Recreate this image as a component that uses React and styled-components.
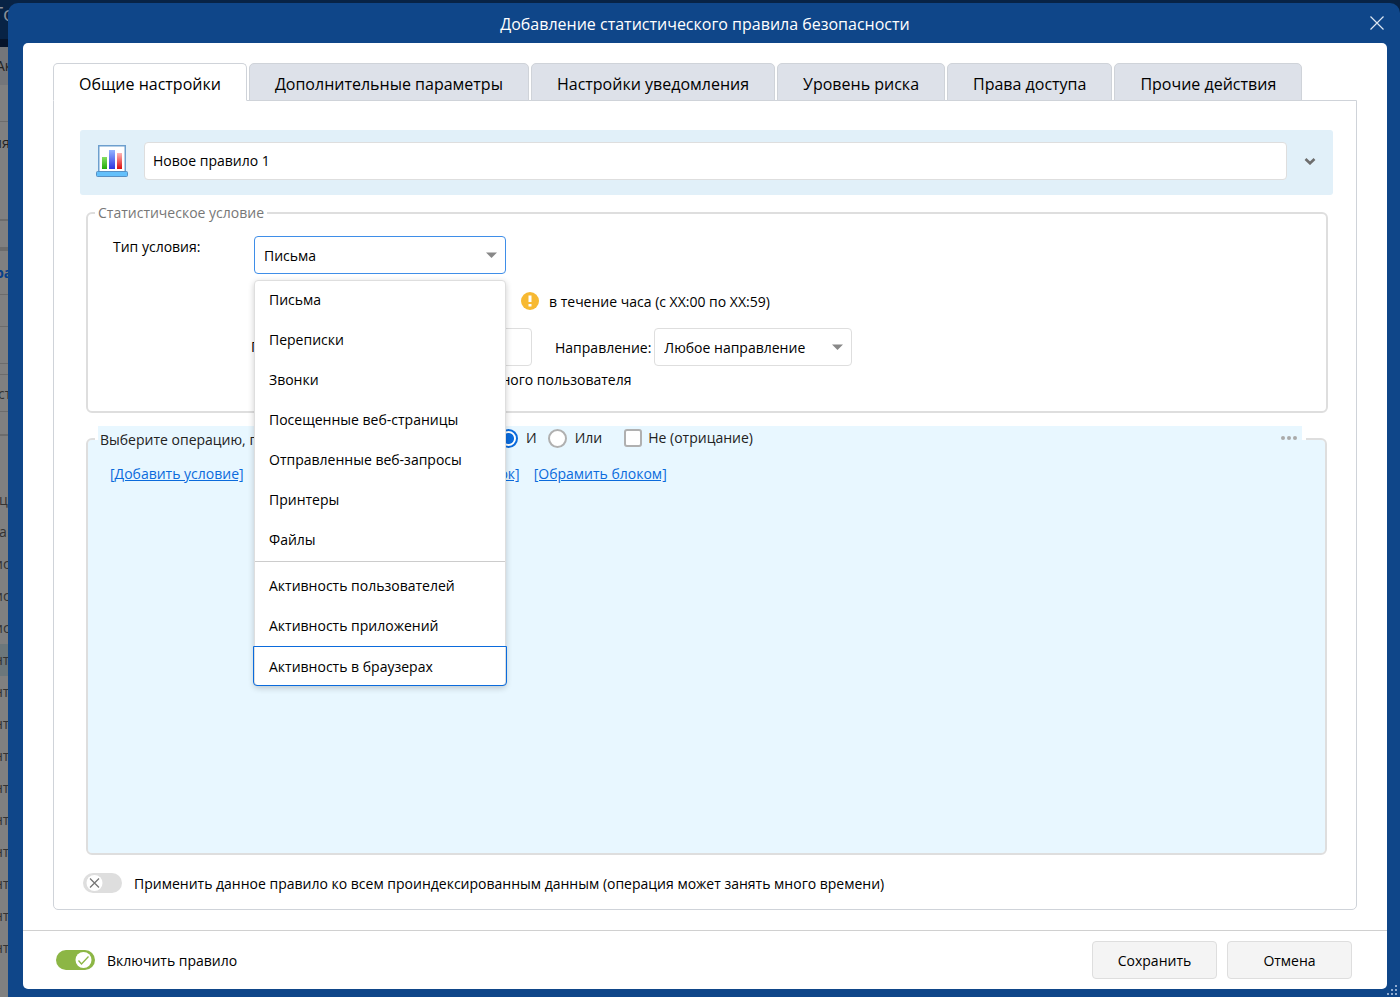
import React, { useState } from 'react';
import styled, { createGlobalStyle, css } from 'styled-components';

const GlobalStyle = createGlobalStyle`
  * { box-sizing: border-box; }
  body {
    margin: 0;
    background: #808080;
    color: #000;
    font: 14px/20px 'Open Sans', 'Noto Sans', sans-serif;
  }
  button, input, select { font: inherit; color: inherit; }
`;

const border = '#dedede';
const blue = '#0b6bdc';

const Screen = styled.div`
  position: relative;
  display: flex;
  min-height: 100vh;
  overflow: hidden;
`;

const Backdrop = styled.div`
  position: absolute;
  inset: 0;
  overflow: hidden;
  background: #808080;
  white-space: nowrap;
`;

const BackHeader = styled.div`
  height: 47px;
  border-bottom: 8px solid #06142b;
  background: #082345;
  color: #8a8f98;
  font-size: 20px;
  line-height: 28px;
  text-indent: -8px;
`;

const BackRow = styled.div`
  height: ${p => p.$height || 32}px;
  line-height: ${p => p.$height || 32}px;
  overflow: hidden;
  color: ${p => p.$color || '#333'};
  background: ${p => p.$bg || 'transparent'};
  font-weight: ${p => (p.$bold ? 700 : 400)};
  text-indent: ${p => p.$indent || 0}px;
  border-bottom: ${p => (p.$line ? `${p.$line}px solid #6c6c6c` : '0')};
`;

const Dialog = styled.section`
  position: relative;
  flex: 1;
  display: flex;
  flex-direction: column;
  min-width: 0;
  margin: 3px 0 0 8px;
  padding: 0 13px 8px 15px;
  border-radius: 10px 10px 0 0;
  background: #0f4689;
`;

const TitleBar = styled.header`
  display: grid;
  grid-template-columns: 20px 1fr 20px;
  align-items: center;
  height: 40px;
  color: #fff;
  h1 {
    margin: 0;
    padding-top: 2px;
    font-size: 16px;
    font-weight: 400;
    text-align: center;
  }
`;

const IconButton = styled.button`
  display: flex;
  align-items: center;
  justify-content: center;
  width: 20px;
  height: 20px;
  padding: 0;
  border: 0;
  background: none;
`;

const Sheet = styled.div`
  flex: 1;
  display: flex;
  flex-direction: column;
  border-radius: 5px;
  background: #fff;
`;

const Body = styled.div`
  flex: 1;
  display: flex;
  flex-direction: column;
  padding: 20px 30px;
`;

const Tabs = styled.div`
  display: flex;
  gap: 2px;
  margin-bottom: -1px;
`;

const Tab = styled.button`
  height: 38px;
  padding: 3px 25px 0;
  border: 1px solid #cfd3d9;
  border-bottom-color: ${p => (p.$active ? '#fff' : '#cfd3d9')};
  border-radius: 5px 5px 0 0;
  background: ${p => (p.$active ? '#fff' : '#dde1e9')};
  font-size: 16px;
  white-space: nowrap;
  z-index: 1;
`;

const Panel = styled.div`
  flex: 1;
  display: flex;
  flex-direction: column;
  padding: 29px 23px 15px 26px;
  border: 1px solid #cfd3d9;
  border-radius: 0 0 5px 5px;
`;

const RuleBar = styled.div`
  display: flex;
  align-items: center;
  height: 65px;
  padding: 0 13px 3px 15px;
  border-radius: 3px;
  background: #e1f0f9;
`;

const RuleName = styled.input`
  flex: 1;
  height: 38px;
  margin: 0 13px 0 15px;
  padding: 0 8px 2px;
  border: 1px solid ${border};
  border-radius: 4px;
  background: #fff;
`;

const group = css`
  min-width: 0;
  padding: 0;
  border: 2px solid ${border};
  border-radius: 6px;
`;

const Condition = styled.fieldset`
  ${group}
  height: 210px;
  margin: 8px 5px 0 6px;
  legend {
    margin-left: 7px;
    padding: 0 3px;
    color: #777;
  }
`;

const Operations = styled.fieldset`
  ${group}
  flex: 1;
  margin: 13px 6px 0 6px;
  background: #e8f7ff;
  background-clip: padding-box;
`;

const OperationLegend = styled.legend`
  width: calc(100% - 26px);
  margin-left: 7px;
  padding: 0 4px 0 3px;
`;

const OperationBar = styled.div`
  display: flex;
  align-items: center;
  height: 26px;
  padding: 0 5px 2px 2px;
  background: #e8f7ff;
  color: #222;
`;

const OperationText = styled.span`
  width: 399px;
  padding-top: 3px;
  overflow: hidden;
  white-space: nowrap;
`;

const Choice = styled.label`
  display: flex;
  align-items: center;
  gap: ${p => p.$gap || 8}px;
  margin-right: ${p => p.$after || 0}px;
  input {
    appearance: none;
    flex: none;
    width: 19px;
    height: 19px;
    margin: 0;
    border: 2px solid #b0b0b0;
    background: #fff;
  }
  input[type='radio'] { border-radius: 50%; }
  input[type='checkbox'] {
    width: 18px;
    height: 18px;
    border-radius: 3px;
  }
  input[type='radio']:checked {
    border-color: ${blue};
    background: radial-gradient(circle, ${blue} 5px, #fff 6px);
  }
`;

const More = styled(IconButton)`
  width: 16px;
  margin-left: auto;
`;

const Links = styled.nav`
  display: flex;
  gap: 14px;
  padding: 12px 22px;
  a { color: ${blue}; white-space: nowrap; }
`;

const WideLink = styled.span`
  width: 262px;
  text-align: right;
`;

const Fields = styled.div`
  display: grid;
  grid-template-columns: 141px 1fr;
  padding: 13px 0 0 25px;
`;

const FieldLabel = styled.label`
  padding-top: 1px;
`;

const FieldColumn = styled.div`
  display: flex;
  flex-direction: column;
  align-items: flex-start;
`;

const Picker = styled.div`
  position: relative;
  width: ${p => p.$width}px;
  svg {
    position: absolute;
    top: 16px;
    right: 9px;
    pointer-events: none;
  }
`;

const Select = styled.select`
  appearance: none;
  width: 100%;
  height: 38px;
  padding: 2px 28px 0 9px;
  border: 1px solid ${p => (p.$open ? '#3f8ee8' : border)};
  border-radius: 4px;
  background: #fff;
  outline: 0;
`;

const Menu = styled.ul`
  position: absolute;
  z-index: 5;
  top: 44px;
  left: 0;
  right: 0;
  margin: 0;
  padding: 0;
  border: 1px solid ${border};
  border-radius: 4px;
  background: #fff;
  box-shadow: 0 2px 6px rgba(0, 0, 0, 0.2);
  list-style: none;
`;

const MenuItem = styled.li`
  height: 40px;
  padding: 0 14px;
  line-height: 38px;
  cursor: pointer;
  ${p => p.$divided && css`
    height: 46px;
    padding-top: 5px;
    border-top: 1px solid #ccc;
  `}
  ${p => p.$focused && css`
    margin: -1px -2px -1px;
    padding: 0 15px;
    border: 1px solid ${blue};
    border-radius: 0 0 4px 4px;
    line-height: 40px;
  `}
`;

const Row = styled.div`
  display: flex;
  align-items: center;
  gap: 3px;
  height: ${p => p.$height}px;
  padding-left: ${p => p.$indent || 0}px;
  white-space: nowrap;
`;

const Period = styled.span`
  margin-left: 7px;
  padding-top: 2px;
`;

const DirectionLabel = styled.label`
  padding-top: 2px;
`;

const PersonField = styled.label`
  display: flex;
  align-items: center;
  width: 281px;
  margin: 0 20px 0 -3px;
  input {
    flex: 1;
    min-width: 0;
    height: 38px;
    margin-left: 8px;
    border: 1px solid ${border};
    border-radius: 4px;
  }
`;

const Switch = styled.label`
  display: flex;
  align-items: center;
  gap: 12px;
`;

const SwitchText = styled.span`
  padding-top: 2px;
`;

const Track = styled.span`
  position: relative;
  display: flex;
  justify-content: ${p => (p.$on ? 'flex-end' : 'flex-start')};
  width: 39px;
  height: 20px;
  padding: 2px 3px;
  border-radius: 10px;
  background: ${p => (p.$on ? '#8cb645' : '#dedede')};
  input {
    position: absolute;
    inset: 0;
    margin: 0;
    opacity: 0;
  }
`;

const ApplyRow = styled.div`
  padding: 17px 0 0 3px;
`;

const Footer = styled.footer`
  display: flex;
  align-items: center;
  gap: 10px;
  height: 59px;
  padding: 0 35px 0 33px;
  border-top: 1px solid #d0d0d0;
`;

const FooterButton = styled.button`
  width: 125px;
  height: 38px;
  padding: 2px 0 0;
  border: 1px solid ${border};
  border-radius: 4px;
  background: #f4f4f4;
  &:first-of-type { margin-left: auto; }
`;

const Grip = styled.svg`
  position: absolute;
  right: 2px;
  bottom: 0;
`;

const tabs = [
  'Общие настройки',
  'Дополнительные параметры',
  'Настройки уведомления',
  'Уровень риска',
  'Права доступа',
  'Прочие действия',
];

const types = [
  'Письма',
  'Переписки',
  'Звонки',
  'Посещенные веб-страницы',
  'Отправленные веб-запросы',
  'Принтеры',
  'Файлы',
  'Активность пользователей',
  'Активность приложений',
  'Активность в браузерах',
];

const backRows = ['ц', 'а', 'ис', 'ис', 'ис', 'нт', 'нт', 'нт', 'нт', 'нт', 'нт', 'нт', 'нт', 'нт', 'нт'];

const ChartIcon = () => (
  <svg width="34" height="36" viewBox="0 0 34 36">
    <defs>
      <linearGradient id="g1" x2="0" y2="1"><stop stopColor="#86df62" /><stop offset="1" stopColor="#22ac08" /></linearGradient>
      <linearGradient id="g2" x2="0" y2="1"><stop stopColor="#93b5ff" /><stop offset="1" stopColor="#2d35df" /></linearGradient>
      <linearGradient id="g3" x2="0" y2="1"><stop stopColor="#ffb4b4" /><stop offset="1" stopColor="#dc0c0c" /></linearGradient>
    </defs>
    <rect x="3.75" y="2.75" width="26.5" height="26" fill="#fff" stroke="#6d9fce" strokeWidth="1.5" />
    <rect x="7" y="14" width="5" height="12" fill="url(#g1)" />
    <rect x="14" y="7" width="6" height="19" fill="url(#g2)" />
    <rect x="22" y="10" width="5" height="16" fill="url(#g3)" />
    <rect x="1.500" y="28.500" width="31" height="5" rx="1" fill="#63c0fb" stroke="#5790c4" />
  </svg>
);

const Caret = () => (
  <svg width="11" height="6" viewBox="0 0 11 6"><path d="M0 .5h11L5.5 6z" fill="#888" /></svg>
);

const Toggle = ({ label, on, onChange }) => (
  <Switch>
    <Track $on={on}>
      <input type="checkbox" role="switch" checked={on} onChange={onChange} />
      <svg width="17" height="16" viewBox="0 0 17 16">
        <circle cx="8.5" cy="8" r="8" fill="#fff" />
        {on
          ? <path d="M3.5 8.5l3 3.5 7-7.5" fill="none" stroke="#8cb645" strokeWidth="1.3" />
          : <path d="M4 3.5l9 9m0-9l-9 9" fill="none" stroke="#777" strokeWidth="1.3" />}
      </svg>
    </Track>
    <SwitchText>{label}</SwitchText>
  </Switch>
);

const Background = () => (
  <Backdrop aria-hidden="true">
    <BackHeader>То</BackHeader>
    <BackRow $height={38} $indent={-4} $bg="#74767a" $color="#222">Ак</BackRow>
    <BackRow $height={37} $line={1} />
    <BackRow $height={41} $indent={-7} $color="#222">ия</BackRow>
    <BackRow $height={58} $line={2} />
    <BackRow $height={30} $line={4} />
    <BackRow $height={44} $indent={-5} $bold $color="#08408a" $line={1}>ра</BackRow>
    <BackRow $height={32} $line={1} />
    <BackRow $height={37} $line={1} />
    <BackRow $height={11} $line={1} />
    <BackRow $height={37} $indent={-2} $line={1}>ст</BackRow>
    <BackRow $height={24} $line={2} />
    <BackRow $height={48} />
    {backRows.map((text, i) => (
      <BackRow key={i} $indent={i < 2 ? -1 : -6} $bg={i === 5 ? '#6c777b' : undefined}>{text}</BackRow>
    ))}
  </Backdrop>
);

const App = () => {
  const [tab, setTab] = useState(0);
  const [type, setType] = useState('Письма');
  const [enabled, setEnabled] = useState(true);
  const [applyAll, setApplyAll] = useState(false);

  return (
    <Screen>
      <GlobalStyle />
      <Background />
      <Dialog role="dialog" aria-labelledby="dialog-title">
        <TitleBar>
          <span />
          <h1 id="dialog-title">Добавление статистического правила безопасности</h1>
          <IconButton aria-label="Закрыть">
            <svg width="14" height="14" viewBox="0 0 14 14"><path d="M.5.5l13 13m0-13l-13 13" stroke="#dce6f2" strokeWidth="1.2" /></svg>
          </IconButton>
        </TitleBar>
        <Sheet>
          <Body>
            <Tabs role="tablist">
              {tabs.map((name, i) => (
                <Tab key={name} role="tab" aria-selected={tab === i} $active={tab === i} onClick={() => setTab(i)}>
                  {name}
                </Tab>
              ))}
            </Tabs>
            <Panel role="tabpanel">
              <RuleBar>
                <ChartIcon />
                <RuleName aria-label="Название правила" defaultValue="Новое правило 1" />
                <IconButton aria-label="Развернуть">
                  <svg width="12" height="8" viewBox="0 0 12 8"><path d="M1.5 2L6 6.300l4.500-4.300" fill="none" stroke="#6e6e6e" strokeWidth="2.6" /></svg>
                </IconButton>
              </RuleBar>
              <Condition>
                <legend>Статистическое условие</legend>
                <Fields>
                  <FieldLabel htmlFor="type">Тип условия:</FieldLabel>
                  <FieldColumn>
                    <Picker $width={252}>
                      <Select id="type" $open value={type} onChange={e => setType(e.target.value)}>
                        {types.map(name => <option key={name}>{name}</option>)}
                      </Select>
                      <Caret />
                      <Menu role="listbox" aria-label="Тип условия">
                        {types.map((name, i) => (
                          <MenuItem
                            key={name}
                            role="option"
                            aria-selected={name === type}
                            $divided={i === 7}
                            $focused={i === 9}
                            onClick={() => setType(name)}
                          >
                            {name}
                          </MenuItem>
                        ))}
                      </Menu>
                    </Picker>
                    <Row $height={54} $indent={267}>
                      <svg width="18" height="18" viewBox="0 0 18 18">
                        <circle cx="9" cy="9" r="9" fill="#f7b932" />
                        <path d="M7.500 3.500h3v6.500h-3zM7.500 12h3v2.500h-3z" fill="#fff" />
                      </svg>
                      <Period>в течение часа (с XX:00 по XX:59)</Period>
                    </Row>
                    <Row $height={38}>
                      <PersonField>
                        Пользователь:
                        <input type="text" />
                      </PersonField>
                      <DirectionLabel htmlFor="direction">Направление:</DirectionLabel>
                      <Picker $width={198}>
                        <Select id="direction">
                          <option>Любое направление</option>
                        </Select>
                        <Caret />
                      </Picker>
                    </Row>
                    <Row $height={28} $indent={231}>одного пользователя</Row>
                  </FieldColumn>
                </Fields>
              </Condition>
              <Operations>
                <OperationLegend>
                  <OperationBar>
                    <OperationText>Выберите операцию, применяемую к условиям:</OperationText>
                    <Choice $after={11}><input type="radio" name="operation" defaultChecked />И</Choice>
                    <Choice $after={22}><input type="radio" name="operation" />Или</Choice>
                    <Choice $gap={6}><input type="checkbox" />Не (отрицание)</Choice>
                    <More aria-label="Ещё">
                      <svg width="16" height="4" viewBox="0 0 16 4" fill="#aaa"><circle cx="2" cy="2" r="2" /><circle cx="8" cy="2" r="2" /><circle cx="14" cy="2" r="2" /></svg>
                    </More>
                  </OperationBar>
                </OperationLegend>
                <Links>
                  <a href="#condition">[Добавить условие]</a>
                  <WideLink><a href="#block">[Добавить блок]</a></WideLink>
                  <a href="#wrap">[Обрамить блоком]</a>
                </Links>
              </Operations>
              <ApplyRow>
                <Toggle
                  label="Применить данное правило ко всем проиндексированным данным (операция может занять много времени)"
                  on={applyAll}
                  onChange={() => setApplyAll(!applyAll)}
                />
              </ApplyRow>
            </Panel>
          </Body>
          <Footer>
            <Toggle label="Включить правило" on={enabled} onChange={() => setEnabled(!enabled)} />
            <FooterButton>Сохранить</FooterButton>
            <FooterButton>Отмена</FooterButton>
          </Footer>
        </Sheet>
        <Grip width="12" height="12" viewBox="0 0 12 12" fill="#8fabd0">
          <path d="M9 0h2v2H9zM9 4h2v2H9zM5 4h2v2H5zM9 8h2v2H9zM5 8h2v2H5zM1 8h2v2H1z" />
        </Grip>
      </Dialog>
    </Screen>
  );
};

export default App;
